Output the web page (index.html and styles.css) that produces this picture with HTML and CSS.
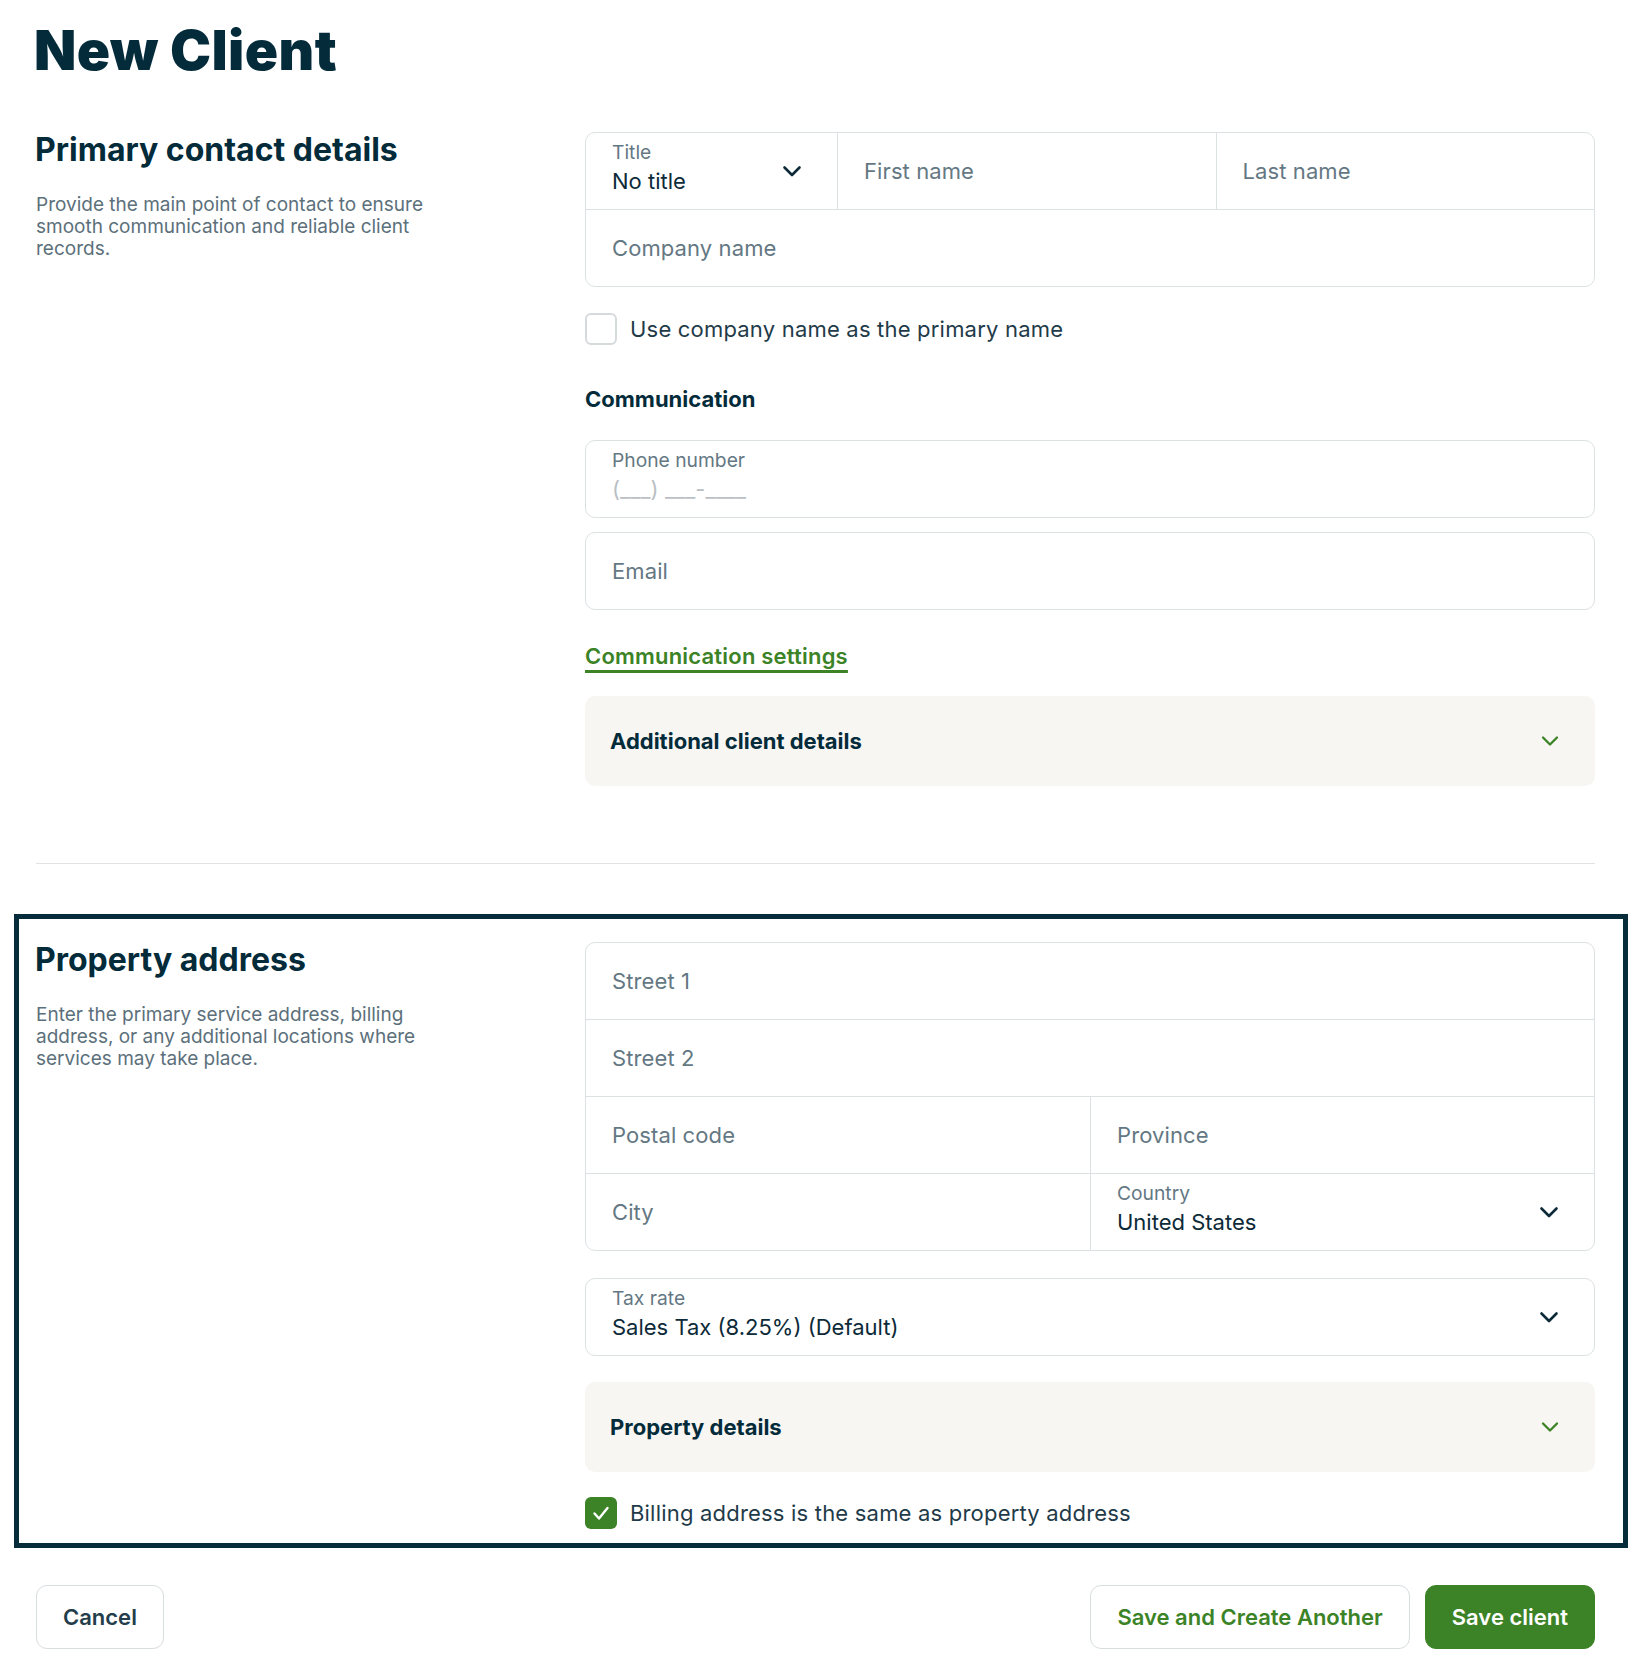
FILE: index.html
```html
<!DOCTYPE html>
<html lang="en">
<head>
  <meta charset="UTF-8" />
  <meta name="viewport" content="width=device-width, initial-scale=1.0"/>
  <title>New Client</title>
  <link rel="stylesheet" href="styles.css">
</head>
<body>
  <main class="page">
    <h1 class="page-title">New Client</h1>

    <section class="form-section form-section--divided">
      <div class="section-intro">
        <h2>Primary contact details</h2>
        <p>Provide the main point of contact to ensure smooth communication and reliable client records.</p>
      </div>

      <div class="section-fields">
        <div class="field-group">
          <div class="field-row field-row--name">
            <div class="field field--select">
              <div class="field-stack">
                <span class="field-label">Title</span>
                <span class="field-value">No title</span>
              </div>
              <svg class="chevron" width="20" height="12" viewBox="0 0 20 12"><path d="M2.5 2.5 L10 10 L17.5 2.5"/></svg>
            </div>
            <div class="field"><input type="text" placeholder="First name" /></div>
            <div class="field"><input type="text" placeholder="Last name" /></div>
          </div>
          <div class="field-row">
            <div class="field"><input type="text" placeholder="Company name" /></div>
          </div>
        </div>

        <label class="check-row">
          <span class="checkbox"></span>
          Use company name as the primary name
        </label>

        <h3 class="subheading">Communication</h3>

        <div class="field field--boxed">
          <div class="field-stack">
            <span class="field-label">Phone number</span>
            <input class="mask-input" type="text" placeholder="(___) ___-____" />
          </div>
        </div>
        <div class="field field--boxed field--gap-sm"><input type="email" placeholder="Email" /></div>

        <a class="text-link" href="#">Communication settings</a>

        <div class="accordion">
          <span>Additional client details</span>
          <svg class="chevron chevron--green" width="20" height="12" viewBox="0 0 20 12"><path d="M3 2.5 L10 9.5 L17 2.5"/></svg>
        </div>
      </div>
    </section>

    <section class="form-section form-section--focus">
      <div class="section-intro">
        <h2>Property address</h2>
        <p>Enter the primary service address, billing address, or any additional locations where services may take place.</p>
      </div>

      <div class="section-fields">
        <div class="field-group">
          <div class="field-row">
            <div class="field"><input type="text" placeholder="Street 1" /></div>
          </div>
          <div class="field-row">
            <div class="field"><input type="text" placeholder="Street 2" /></div>
          </div>
          <div class="field-row field-row--half">
            <div class="field"><input type="text" placeholder="Postal code" /></div>
            <div class="field"><input type="text" placeholder="Province" /></div>
          </div>
          <div class="field-row field-row--half">
            <div class="field"><input type="text" placeholder="City" /></div>
            <div class="field field--select">
              <div class="field-stack">
                <span class="field-label">Country</span>
                <span class="field-value">United States</span>
              </div>
              <svg class="chevron" width="20" height="12" viewBox="0 0 20 12"><path d="M2.5 2.5 L10 10 L17.5 2.5"/></svg>
            </div>
          </div>
        </div>

        <div class="field field--boxed field--select field--gap-lg">
          <div class="field-stack">
            <span class="field-label">Tax rate</span>
            <span class="field-value">Sales Tax (8.25%) (Default)</span>
          </div>
          <svg class="chevron" width="20" height="12" viewBox="0 0 20 12"><path d="M2.5 2.5 L10 10 L17.5 2.5"/></svg>
        </div>

        <div class="accordion">
          <span>Property details</span>
          <svg class="chevron chevron--green" width="20" height="12" viewBox="0 0 20 12"><path d="M3 2.5 L10 9.5 L17 2.5"/></svg>
        </div>

        <label class="check-row check-row--tight">
          <span class="checkbox checkbox--checked">
            <svg width="32" height="32" viewBox="0 0 32 32"><path d="M9.5 16.5 L14 21.5 L22.5 11"/></svg>
          </span>
          Billing address is the same as property address
        </label>
      </div>
    </section>

    <div class="actions">
      <button class="button">Cancel</button>
      <div class="actions-right">
        <button class="button button--secondary">Save and Create Another</button>
        <button class="button button--primary">Save client</button>
      </div>
    </div>
  </main>
</body>
</html>
```

FILE: styles.css
```css
* {
  margin: 0;
  padding: 0;
  box-sizing: border-box;
}

body {
  font-family: Inter, 'Noto Sans', sans-serif;
  color: #032b3a;
  background: #fff;
}

.page {
  padding: 23px 47px 30px 36px;
}

.page-title {
  margin-left: -2px;
  margin-bottom: 54px;
  font-size: 55px;
  font-weight: 900;
  line-height: 1;
  letter-spacing: 0.4px;
}

/* sections */
.form-section {
  display: grid;
  grid-template-columns: 1fr 2fr;
  column-gap: 44px;
  align-items: start;
}

.form-section--divided {
  padding-bottom: 77px;
  border-bottom: 1px solid #dfe3e5;
}

.form-section--focus {
  margin: 50px -33px 0 -22px;
  padding: 23px 28px 14px 17px;
  border: 5px solid #062c3b;
}

.section-intro h2 {
  margin-left: -1px;
  font-size: 32px;
  font-weight: 700;
  line-height: 1.15;
}

.section-intro p {
  margin-top: 25px;
  max-width: 420px;
  font-size: 19px;
  line-height: 22px;
  color: #5c707b;
}

.section-fields {
  display: flex;
  flex-direction: column;
}

/* fields */
.field-group {
  border: 1px solid #dce1e4;
  border-radius: 10px;
}

.field-row {
  display: grid;
}

.field-row + .field-row {
  border-top: 1px solid #dce1e4;
}

.field-row--name {
  grid-template-columns: 251px 1fr 1fr;
}

.field-row--half {
  grid-template-columns: 1fr 1fr;
}

.field {
  height: 76px;
  display: flex;
  align-items: center;
  padding: 0 35px 0 26px;
}

.field + .field {
  border-left: 1px solid #dce1e4;
}

.field--boxed {
  height: 78px;
  border: 1px solid #dce1e4;
  border-radius: 10px;
  margin-top: 28px;
}

.field--boxed + .field--boxed {
  border-left: 1px solid #dce1e4;
}

.field--gap-sm {
  margin-top: 14px;
}

.field--gap-lg {
  margin-top: 27px;
}

.field-stack {
  flex: 1;
  align-self: flex-start;
  display: flex;
  flex-direction: column;
  padding-top: 8px;
}

.field-label {
  font-size: 19.25px;
  line-height: 1.2;
  color: #647883;
}

.field-value {
  margin-top: 4px;
  font-size: 22px;
  line-height: 1.2;
  color: #0d2a38;
}

.field input {
  width: 100%;
  border: 0;
  outline: 0;
  padding: 0;
  background: transparent;
  font-family: inherit;
  font-size: 22px;
  line-height: 1.2;
  letter-spacing: 0.1px;
  color: #0d2a38;
}

.field input::placeholder {
  color: #647883;
  opacity: 1;
}

.field-stack .mask-input {
  margin-top: 4px;
}

.field-stack .mask-input::placeholder {
  color: #b9c0c5;
}

.chevron {
  flex-shrink: 0;
  fill: none;
  stroke: #0d2a38;
  stroke-width: 2.6;
  stroke-linecap: round;
  stroke-linejoin: round;
}

.chevron--green {
  stroke: #3b8326;
  stroke-width: 2.3;
}

/* checkbox */
.check-row {
  display: flex;
  align-items: center;
  gap: 13px;
  margin-top: 26px;
  font-size: 22px;
  line-height: 32px;
  letter-spacing: 0.2px;
  color: #1f3b49;
}

.check-row--tight {
  margin-top: 25px;
}

.checkbox {
  width: 32px;
  height: 32px;
  flex-shrink: 0;
  border: 2px solid #d5dadd;
  border-radius: 6px;
}

.checkbox--checked {
  background: #3b8326;
  border: 0;
}

.checkbox svg {
  display: block;
  fill: none;
  stroke: #fff;
  stroke-width: 2.4;
  stroke-linecap: round;
  stroke-linejoin: round;
}

.subheading {
  margin-top: 41px;
  font-size: 22px;
  font-weight: 700;
  line-height: 1.2;
}

.text-link {
  align-self: flex-start;
  margin-top: 33px;
  font-size: 22px;
  font-weight: 600;
  line-height: 1.2;
  letter-spacing: 0.2px;
  color: #3b8326;
  text-decoration: underline;
  text-decoration-thickness: 3px;
  text-underline-offset: 6px;
}

.accordion {
  height: 90px;
  margin-top: 26px;
  display: flex;
  align-items: center;
  justify-content: space-between;
  padding: 0 35px 0 25px;
  background: #f7f6f3;
  border-radius: 10px;
  font-size: 22px;
  font-weight: 700;
}

/* footer buttons */
.actions {
  display: flex;
  justify-content: space-between;
  margin-top: 37px;
}

.actions-right {
  display: flex;
  gap: 15px;
}

.button {
  height: 64px;
  padding: 0 26px;
  border: 1px solid #d8dde0;
  border-radius: 11px;
  background: #fff;
  font-family: inherit;
  font-size: 22px;
  font-weight: 600;
  color: #233d4b;
  cursor: pointer;
}

.button--secondary {
  color: #3b8326;
}

.button--primary {
  background: #3b8326;
  border-color: #3b8326;
  color: #fff;
}
```
